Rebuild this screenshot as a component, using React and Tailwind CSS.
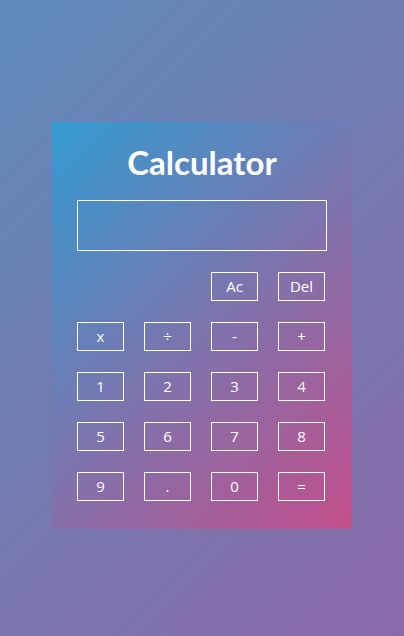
export default function App() {
  const rows = [
    ["", "", "Ac", "Del"],
    ["x", "÷", "-", "+"],
    ["1", "2", "3", "4"],
    ["5", "6", "7", "8"],
    ["9", ".", "0", "="],
  ];
  return (
    <div
      className="min-h-[636px] w-full flex justify-center pt-[122px] bg-[linear-gradient(135deg,#5e8bba_0%,#8b69a8_100%)]"
      style={{ fontFamily: '"Open Sans", "Noto Sans", sans-serif' }}
    >
      <div className="w-[300px] h-[407px] px-[25px] pt-[20px] bg-[linear-gradient(135deg,#339bd1_0%,#c34e8b_100%)]">
        <h1
          className="text-white text-[33px] font-bold text-center leading-[40px]"
          style={{ fontFamily: 'Lato, "Open Sans", sans-serif' }}
        >
          Calculator
        </h1>
        <div className="mt-[18px] h-[51px] border border-white"></div>
        <div className="mt-[21px] grid grid-cols-[repeat(4,47px)] gap-x-[20px] gap-y-[21px]">
          {rows.flat().map((k, i) =>
            k === "" ? (
              <div key={i} className="h-[29px]"></div>
            ) : (
              <div
                key={i}
                className="h-[29px] border border-white flex items-center justify-center text-white text-[15px] font-medium"
              >
                {k}
              </div>
            )
          )}
        </div>
      </div>
    </div>
  );
}
